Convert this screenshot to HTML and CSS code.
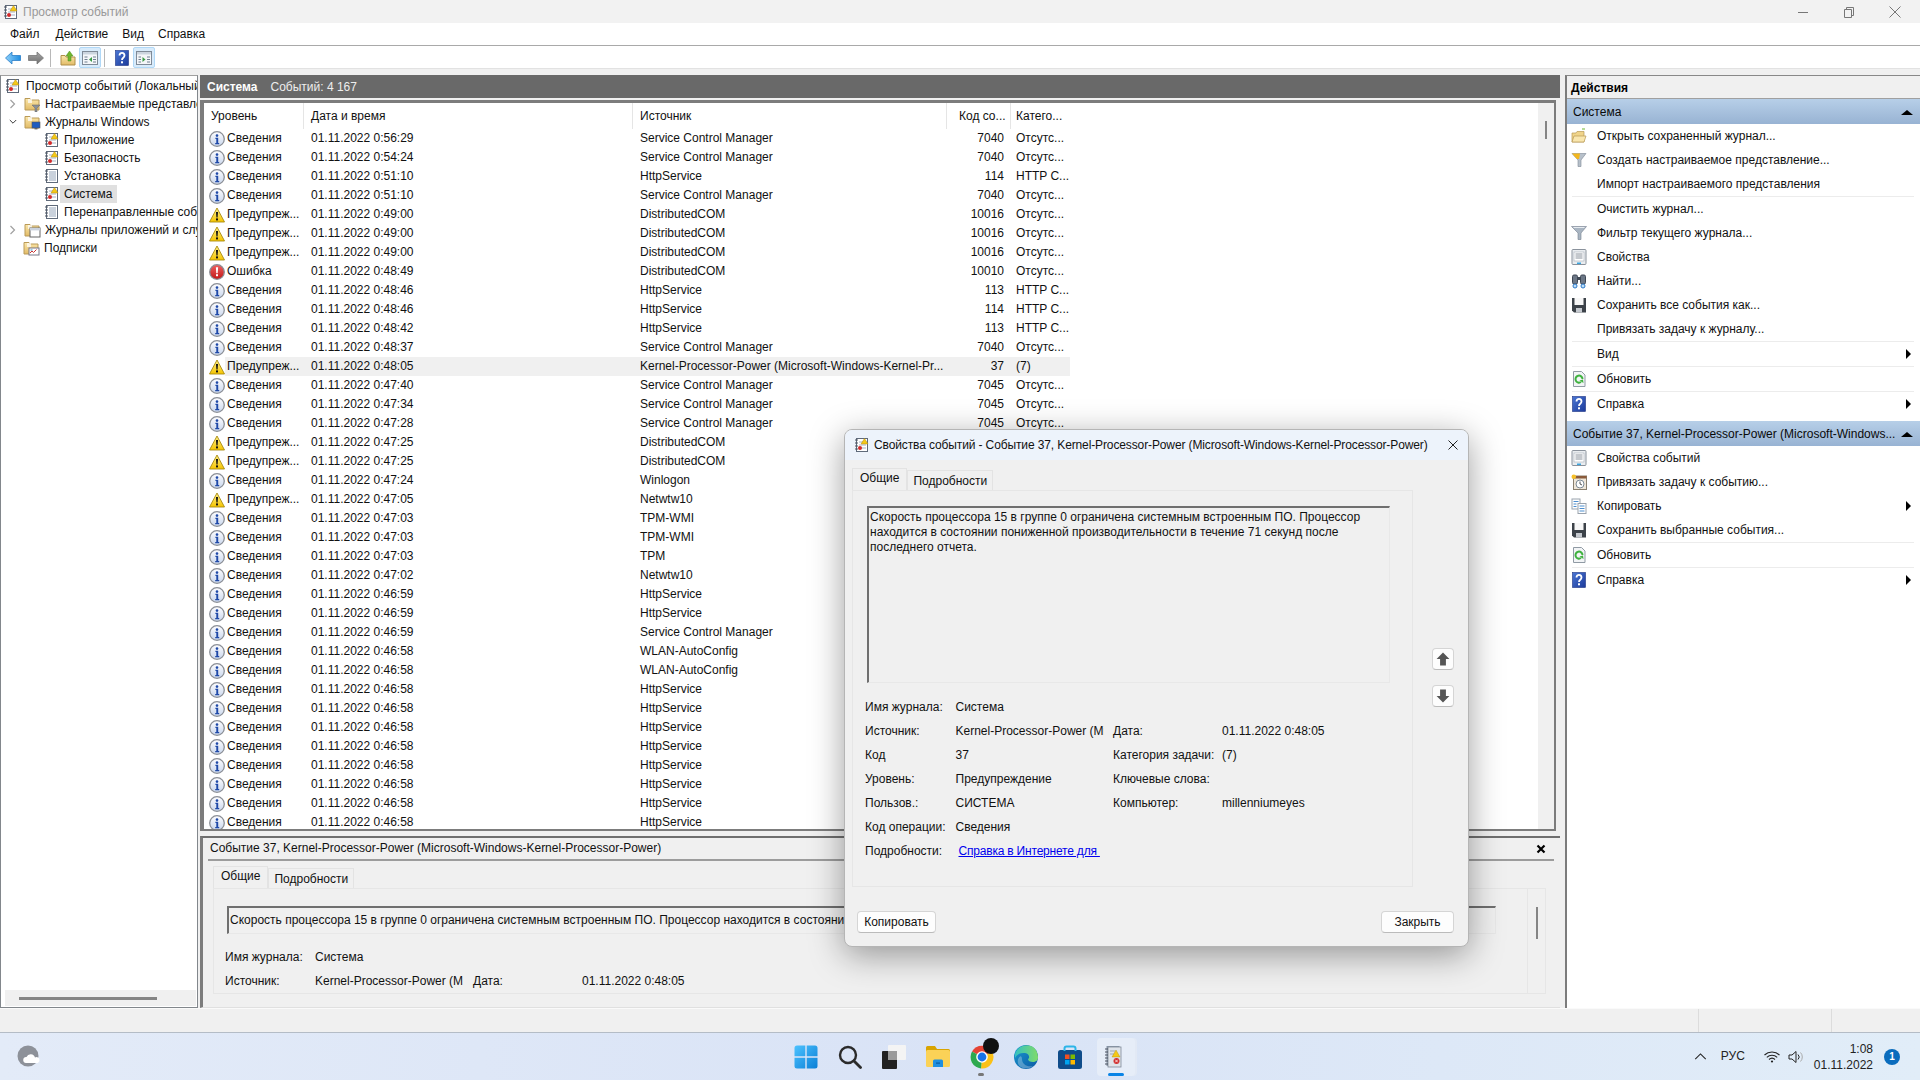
FILE: index.html
```html
<!DOCTYPE html>
<html lang="ru">
<head>
<meta charset="utf-8">
<title>Просмотр событий</title>
<link rel="stylesheet" href="styles.css">
</head>
<body>
<svg class="defs" width="0" height="0" aria-hidden="true">
<defs>
<linearGradient id="gInfo" x1="0" y1="0" x2="0" y2="1"><stop offset="0" stop-color="#fdfdff"/><stop offset="1" stop-color="#c9d6ec"/></linearGradient>
<linearGradient id="gWarn" x1="0" y1="0" x2="0" y2="1"><stop offset="0" stop-color="#fff08a"/><stop offset="1" stop-color="#f5c400"/></linearGradient>
<linearGradient id="gErr" x1="0" y1="0" x2="0" y2="1"><stop offset="0" stop-color="#f06060"/><stop offset="1" stop-color="#c01818"/></linearGradient>
<linearGradient id="gBlue" x1="0" y1="0" x2="1" y2="0"><stop offset="0" stop-color="#8ed0fa"/><stop offset="1" stop-color="#1f8de0"/></linearGradient>
<linearGradient id="gGray" x1="0" y1="0" x2="0" y2="1"><stop offset="0" stop-color="#a8a8a8"/><stop offset="1" stop-color="#6e6e6e"/></linearGradient>
<linearGradient id="gFold" x1="0" y1="0" x2="0" y2="1"><stop offset="0" stop-color="#fbe7ab"/><stop offset="1" stop-color="#e2bb66"/></linearGradient>
<linearGradient id="gHelp" x1="0" y1="0" x2="1" y2="1"><stop offset="0" stop-color="#4a76d4"/><stop offset="1" stop-color="#1c3a9a"/></linearGradient>
<linearGradient id="gWin" x1="0" y1="0" x2="1" y2="1"><stop offset="0" stop-color="#4cc2ff"/><stop offset="1" stop-color="#0a7fd6"/></linearGradient>
<linearGradient id="gEdge" x1="0" y1="0" x2="1" y2="1"><stop offset="0" stop-color="#1a9ad0"/><stop offset="1" stop-color="#0c59a4"/></linearGradient>
<linearGradient id="gEdge2" x1="0" y1="0" x2="1" y2="0"><stop offset="0" stop-color="#35c1c0"/><stop offset="1" stop-color="#7fdb6a"/></linearGradient>

<symbol id="info" viewBox="0 0 16 16"><circle cx="8" cy="8" r="7.3" fill="url(#gInfo)" stroke="#8b8f96" stroke-width="1.3"/><circle cx="8" cy="4.6" r="1.3" fill="#1f49a8"/><path d="M6.4 6.8h2.8v5.2h1v1.2H6.2V12h1.1V8H6.4z" fill="#1f49a8"/></symbol>
<symbol id="warn" viewBox="0 0 16 16"><path d="M8 1 15.5 15H.5z" fill="url(#gWarn)" stroke="#a88a10" stroke-width=".9" stroke-linejoin="round"/><path d="M7 5h2l-.4 5.5h-1.2z" fill="#111"/><rect x="7" y="11.4" width="2" height="2" fill="#111"/></symbol>
<symbol id="err" viewBox="0 0 16 16"><circle cx="8" cy="8" r="7.3" fill="url(#gErr)" stroke="#8b8f96" stroke-width="1.3"/><path d="M6.9 3.2h2.2l-.4 6h-1.4z" fill="#fff"/><rect x="7" y="10.2" width="2" height="2" fill="#fff"/></symbol>

<symbol id="logw" viewBox="0 0 16 16"><rect x="2.5" y="1.5" width="11" height="13" fill="#fff" stroke="#5f6a7a"/><path d="M1 3h3M1 6h3M1 9h3M1 12h3" stroke="#4a5260"/><path d="M5 5h7M5 8h7M5 11h7" stroke="#a4b0c0"/><path d="M10.5 1.5 14 7H7z" fill="#f5c916" stroke="#b08a10" stroke-width=".5"/><circle cx="6" cy="11" r="2" fill="#d32a2a"/></symbol>
<symbol id="log" viewBox="0 0 16 16"><rect x="2.5" y="1.5" width="11" height="13" fill="#fff" stroke="#5f6a7a"/><path d="M1 3h3M1 6h3M1 9h3M1 12h3" stroke="#4a5260"/><path d="M5 4h7M5 6h7M5 8h7M5 10h7M5 12h7" stroke="#93a3b8"/></symbol>
<symbol id="folder" viewBox="0 0 17 16"><path d="M1 4V2.5h5L7 4h8v10H1z" fill="url(#gFold)" stroke="#b99a58"/><path d="M4 3h4v4H4z" fill="#fff" opacity=".7"/></symbol>
<symbol id="ffilter" viewBox="0 0 17 16"><use href="#folder" width="17" height="16"/><path d="M8 9h8l-3 3v4h-2v-4z" fill="#8a9098" stroke="#666" stroke-width=".5"/></symbol>
<symbol id="fwin" viewBox="0 0 17 16"><use href="#folder" width="17" height="16"/><rect x="8" y="8" width="8" height="6" fill="#1e5cc0" stroke="#555" stroke-width=".6"/><rect x="10.5" y="14" width="3" height="1.4" fill="#666"/></symbol>
<symbol id="fapp" viewBox="0 0 17 16"><use href="#folder" width="17" height="16"/><rect x="6" y="6" width="10" height="9" fill="#fff" stroke="#666"/><rect x="6" y="6" width="10" height="2.4" fill="#cbd3de"/></symbol>
<symbol id="fsub" viewBox="0 0 17 16"><use href="#folder" width="17" height="16"/><rect x="6" y="8" width="10" height="7" fill="#fff" stroke="#778"/><path d="M7 13l2-2 1.5 1.5 3-3" stroke="#c33" fill="none"/><path d="M7.5 10h2" stroke="#39c"/></symbol>

<symbol id="back" viewBox="0 0 16 14"><path d="M.5 7 7 1v3.5h8.5v5H7V13z" fill="url(#gBlue)" stroke="#2a7ec8" stroke-width=".8"/></symbol>
<symbol id="fwd" viewBox="0 0 16 14"><path d="M15.5 7 9 1v3.5H.5v5H9V13z" fill="url(#gGray)" stroke="#777" stroke-width=".8"/></symbol>
<symbol id="up" viewBox="0 0 16 16"><path d="M1 5.500h4l1 1.500h9v8H1z" fill="url(#gFold)" stroke="#b08f4a"/><path d="M8 11V6H6l3.500-5L13 6h-2v5z" fill="#6fb72e" stroke="#4d8a1c" stroke-width=".5"/></symbol>
<symbol id="paneL" viewBox="0 0 16 16"><rect x=".5" y="1.500" width="15" height="13" fill="#f4f6f9" stroke="#7f8a97"/><rect x="1" y="2" width="14" height="2.500" fill="#ccd5df"/><path d="M2.500 7h3M2.500 9.500h3M2.500 12h3M11 7h3M11 9.500h3M11 12h3" stroke="#6f7e90"/><path d="M10 7v5L7 9.500z" fill="#3b9b45"/></symbol>
<symbol id="paneR" viewBox="0 0 16 16"><rect x=".5" y="1.500" width="15" height="13" fill="#f4f6f9" stroke="#7f8a97"/><rect x="1" y="2" width="14" height="2.500" fill="#ccd5df"/><path d="M2.500 7h2.500M2.500 9.500h2.500M2.500 12h2.500M11 7h3M11 9.500h3M11 12h3" stroke="#6f7e90"/><path d="M6.500 7v5l3-2.500z" fill="#3b9b45"/></symbol>
<symbol id="help" viewBox="0 0 16 16"><rect x="1.500" y=".5" width="13" height="15" fill="url(#gHelp)" stroke="#1c3384" stroke-width=".6"/><path d="M5.500 5.500C5.500 2 10.500 2 10.500 5.500 10.500 8 8 7.500 8 10" fill="none" stroke="#fff" stroke-width="1.800"/><rect x="7" y="11.300" width="2" height="2" fill="#fff"/></symbol>

<symbol id="open" viewBox="0 0 16 16"><path d="M1 5h4l1-1.500h7V14H1z" fill="#f0d48a" stroke="#b89a55" stroke-width=".7"/><path d="M1 14l2-6h12l-2 6z" fill="#f9e6ae" stroke="#b89a55" stroke-width=".7"/><path d="M11 1h3" stroke="#6fb72e"/></symbol>
<symbol id="fcreate" viewBox="0 0 16 16"><path d="M1 1.500h14L10 8v6.500H7V8z" fill="#b7c0ca" stroke="#7d8895" stroke-width=".6"/><path d="M1 1.500h8L8 7 6 7z" fill="#f3b71e"/></symbol>
<symbol id="filter" viewBox="0 0 16 16"><path d="M.5 1.500h15L10 8v6.500H7V8z" fill="#a9b5c2" stroke="#75808e" stroke-width=".6"/><path d="M2.500 2.500h11" stroke="#e6ebf0"/></symbol>
<symbol id="props" viewBox="0 0 16 16"><rect x="1" y=".5" width="14" height="15" rx="1" fill="#eaedf0" stroke="#8a929c"/><rect x="3" y="3" width="10" height="9" fill="#fff" stroke="#a7aeb8" stroke-width=".6"/><path d="M4.500 5h7M4.500 7h7M4.500 9h7" stroke="#8a929c"/><rect x="6" y="13.500" width="4" height="1.500" fill="#3aa5e0"/></symbol>
<symbol id="find" viewBox="0 0 16 16"><rect x="1.500" y="2" width="5" height="9" rx="1.500" fill="#6c7786" stroke="#3e4754"/><rect x="9.500" y="2" width="5" height="9" rx="1.500" fill="#6c7786" stroke="#3e4754"/><rect x="6" y="4" width="4" height="3" fill="#3e4754"/><circle cx="4" cy="13" r="2" fill="#bfe0fa" stroke="#2a78c8"/><circle cx="12" cy="13" r="2" fill="#bfe0fa" stroke="#2a78c8"/></symbol>
<symbol id="save" viewBox="0 0 16 16"><path d="M1 1h14v14.500H3L1 13.500z" fill="#3c4249"/><rect x="3.500" y="1" width="9" height="7" fill="#f7f7f7"/><rect x="5" y="11" width="6" height="4.500" fill="#c5c9cf"/></symbol>
<symbol id="refresh" viewBox="0 0 16 16"><path d="M2.500.5h8l3.500 3.500v11.500H2.500z" fill="#f2f4f6" stroke="#909aa4"/><path d="M11.500 8A3.500 3.500 0 1 0 10 11" fill="none" stroke="#3fb23f" stroke-width="2"/><path d="M8.500 9.500l3.500-1 .5 3.500z" fill="#3fb23f"/></symbol>
<symbol id="sched" viewBox="0 0 16 16"><rect x="2.500" y="2" width="13" height="13.500" fill="#efe6d8" stroke="#8a7f6e"/><rect x="2.500" y="2" width="13" height="2.500" fill="#8a5a3a"/><circle cx="9" cy="10" r="4" fill="#fff" stroke="#7d8a95"/><path d="M9 7.500V10l2 1" fill="none" stroke="#555"/><circle cx="2.800" cy="2.800" r="2.300" fill="#f6c02a"/></symbol>
<symbol id="copy" viewBox="0 0 16 16"><rect x="1" y="1" width="8" height="10" fill="#fff" stroke="#9aa3ae"/><rect x="7" y="5.500" width="8" height="10" fill="#fff" stroke="#9aa3ae"/><path d="M2.500 3.500h5M2.500 6h3M2.500 8.500h3M8.500 8h5M8.500 10.500h5M8.500 13h5" stroke="#4d8fd0"/></symbol>

<symbol id="tWin" viewBox="0 0 24 24"><path d="M.5 3Q.5.5 3 .5h8.300v10.800H.5zM12.700.5H21Q23.500.5 23.500 3v8.300H12.700zM.5 12.700h10.800v10.800H3Q.5 23.500.5 21zM12.700 12.700h10.800V21q0 2.500-2.500 2.500h-8.300z" fill="url(#gWin)"/></symbol>
<symbol id="tSearch" viewBox="0 0 24 24"><circle cx="10" cy="10" r="8" fill="none" stroke="#2b2b2b" stroke-width="2.400"/><path d="M16 16l6.500 6.500" stroke="#2b2b2b" stroke-width="2.800" stroke-linecap="round"/></symbol>
<symbol id="tView" viewBox="0 0 24 24"><rect x="0" y="6" width="15" height="18" rx="1" fill="#222"/><rect x="6" y="0" width="18" height="15" rx="1" fill="#f4f4f4"/><rect x="6" y="6" width="9" height="9" fill="#9b9b9b"/></symbol>
<symbol id="tFolder" viewBox="0 0 24 24"><path d="M0 2.500Q0 1 1.500 1H9l2 3h11.500Q24 4 24 5.500v3H0z" fill="#d9a400"/><rect x="0" y="5" width="24" height="17" rx="1.500" fill="#fbd257"/><path d="M7 16q0-1.500 1.500-1.500h7q1.500 0 1.500 1.500v6H7z" fill="#1f8fe0"/><rect x="10" y="17.500" width="4" height="1.200" fill="#0b5aa0"/></symbol>
<symbol id="tChrome" viewBox="0 0 24 24"><path d="M12 12 2 6.500A11.500 11.500 0 0 1 22 6.500z" fill="#e54335"/><path d="M12 12 22 6.500A11.500 11.500 0 0 1 11 23.500z" fill="#fbc116"/><path d="M12 12 11 23.500A11.500 11.500 0 0 1 2 6.500z" fill="#2da94f"/><circle cx="12" cy="12" r="5.800" fill="#fff"/><circle cx="12" cy="12" r="4.400" fill="#1a73e8"/></symbol>
<symbol id="tEdge" viewBox="0 0 24 24"><circle cx="12" cy="12" r="12" fill="url(#gEdge)"/><path d="M1 9C3 2 10-.5 16 .8 21 2 24 7 24 12.500c0 3-2.500 4.500-5 4.500-3 0-5-1-5-3 2-1 1.500-5.500-3-6C6.500 7.500 3 9 1 13z" fill="url(#gEdge2)"/><path d="M8 14c0 5 5 8.500 11 7-3 2.500-9 3.500-13 .5C3 19 3 14 6 11.500c1-.5 2 .5 2 2.500z" fill="#fff" opacity=".28"/></symbol>
<symbol id="tStore" viewBox="0 0 24 24"><rect x="0" y="5" width="24" height="19" rx="2.500" fill="#0f4c8a"/><path d="M6.500 6V3.500Q6.500 1.500 8.500 1.500h7Q17.500 1.500 17.500 3.500V6" fill="none" stroke="#2cb5e8" stroke-width="2"/><rect x="7" y="9.500" width="4.500" height="4.500" fill="#f25022"/><rect x="12.500" y="9.500" width="4.500" height="4.500" fill="#7fba00"/><rect x="7" y="15" width="4.500" height="4.500" fill="#00a4ef"/><rect x="12.500" y="15" width="4.500" height="4.500" fill="#ffb900"/></symbol>
<symbol id="tApp" viewBox="0 0 24 24"><path d="M4.500 1h13v20h-13z" fill="#8b97a8"/><rect x="6" y="2" width="13" height="20" fill="#dfe4ea" stroke="#7f8a98" stroke-width=".8"/><path d="M3 4h3M3 7h3M3 10h3M3 13h3M3 16h3M3 19h3" stroke="#4a5260"/><path d="M8 6h5M8 9h4" stroke="#9aa6b6"/><path d="M14 5l4 7h-8z" fill="#f5c916" stroke="#a88a10" stroke-width=".4"/><circle cx="14.500" cy="16" r="3" fill="#d23030"/><path d="M13.200 14.700l2.600 2.600M15.800 14.700l-2.600 2.600" stroke="#fff" stroke-width=".8"/></symbol>
</defs>
</svg>

<header class="titlebar">
  <svg class="ico16 tb-ico"><use href="#logw"/></svg>
  <span class="tb-title">Просмотр событий</span>
  <div class="wincontrols">
    <svg class="wc" viewBox="0 0 12 12"><path d="M1 6.500h10" stroke="#777"/></svg>
    <svg class="wc" viewBox="0 0 12 12"><path d="M1.500 3.500h7v8h-7zM3.500 3.500v-2h7v8h-2" fill="none" stroke="#777"/></svg>
    <svg class="wc" viewBox="0 0 12 12"><path d="M.5.500l11 11M11.500.500l-11 11" stroke="#777"/></svg>
  </div>
</header>
<nav class="menubar"><span class="menu-first">Файл</span><span>Действие</span><span>Вид</span><span>Справка</span></nav>
<div class="toolbar">
  <span class="tool"><svg class="ico-arrow"><use href="#back"/></svg></span>
  <span class="tool"><svg class="ico-arrow"><use href="#fwd"/></svg></span>
  <span class="tsep"></span>
  <span class="tool tool-up"><svg class="ico16"><use href="#up"/></svg></span>
  <span class="tool tool-on"><svg class="ico16"><use href="#paneL"/></svg></span>
  <span class="tsep"></span>
  <span class="tool tool-help"><svg class="ico16"><use href="#help"/></svg></span>
  <span class="tool tool-on"><svg class="ico16"><use href="#paneR"/></svg></span>
</div>

<main class="main">
  <aside class="tree">
    <div class="tree-body">
      <div class="tn lv0"><svg class="ico16"><use href="#logw"/></svg><span class="tn-text">Просмотр событий (Локальный)</span></div>
      <div class="tn lv1"><svg class="exp" viewBox="0 0 8 10"><path d="M1.500 1l4 4-4 4" fill="none" stroke="#a0a0a0" stroke-width="1.200"/></svg><svg class="ico17"><use href="#ffilter"/></svg><span class="tn-text">Настраиваемые представления</span></div>
      <div class="tn lv1"><svg class="exp" viewBox="0 0 10 8"><path d="M1 1.500l4 4 4-4" fill="none" stroke="#333" stroke-width="1.200"/></svg><svg class="ico17"><use href="#fwin"/></svg><span class="tn-text">Журналы Windows</span></div>
      <div class="tn lv2"><svg class="ico16"><use href="#logw"/></svg><span class="tn-text">Приложение</span></div>
      <div class="tn lv2"><svg class="ico16"><use href="#logw"/></svg><span class="tn-text">Безопасность</span></div>
      <div class="tn lv2"><svg class="ico16"><use href="#log"/></svg><span class="tn-text">Установка</span></div>
      <div class="tn lv2 tn-sel"><svg class="ico16"><use href="#logw"/></svg><span class="tn-text">Система</span></div>
      <div class="tn lv2"><svg class="ico16"><use href="#log"/></svg><span class="tn-text">Перенаправленные события</span></div>
      <div class="tn lv1"><svg class="exp" viewBox="0 0 8 10"><path d="M1.500 1l4 4-4 4" fill="none" stroke="#a0a0a0" stroke-width="1.200"/></svg><svg class="ico17"><use href="#fapp"/></svg><span class="tn-text">Журналы приложений и служб</span></div>
      <div class="tn lv1 noexp"><svg class="ico17"><use href="#fsub"/></svg><span class="tn-text">Подписки</span></div>
    </div>
    <div class="hscroll"><span class="hthumb"></span></div>
  </aside>

  <section class="center">
    <div class="listhead"><b>Система</b><span>Событий: 4 167</span></div>
    <div class="listframe">
      <div class="listtable">
        <div class="row head"><span class="c1">Уровень</span><span class="c2">Дата и время</span><span class="c3">Источник</span><span class="c4 c4h">Код со...</span><span class="c5">Катего...</span></div>
        <div class="row"><span class="c1"><svg class="ico16"><use href="#info"/></svg>Сведения</span><span class="c2">01.11.2022 0:56:29</span><span class="c3">Service Control Manager</span><span class="c4">7040</span><span class="c5">Отсутс...</span></div>
        <div class="row"><span class="c1"><svg class="ico16"><use href="#info"/></svg>Сведения</span><span class="c2">01.11.2022 0:54:24</span><span class="c3">Service Control Manager</span><span class="c4">7040</span><span class="c5">Отсутс...</span></div>
        <div class="row"><span class="c1"><svg class="ico16"><use href="#info"/></svg>Сведения</span><span class="c2">01.11.2022 0:51:10</span><span class="c3">HttpService</span><span class="c4">114</span><span class="c5">HTTP C...</span></div>
        <div class="row"><span class="c1"><svg class="ico16"><use href="#info"/></svg>Сведения</span><span class="c2">01.11.2022 0:51:10</span><span class="c3">Service Control Manager</span><span class="c4">7040</span><span class="c5">Отсутс...</span></div>
        <div class="row"><span class="c1"><svg class="ico16"><use href="#warn"/></svg>Предупреж...</span><span class="c2">01.11.2022 0:49:00</span><span class="c3">DistributedCOM</span><span class="c4">10016</span><span class="c5">Отсутс...</span></div>
        <div class="row"><span class="c1"><svg class="ico16"><use href="#warn"/></svg>Предупреж...</span><span class="c2">01.11.2022 0:49:00</span><span class="c3">DistributedCOM</span><span class="c4">10016</span><span class="c5">Отсутс...</span></div>
        <div class="row"><span class="c1"><svg class="ico16"><use href="#warn"/></svg>Предупреж...</span><span class="c2">01.11.2022 0:49:00</span><span class="c3">DistributedCOM</span><span class="c4">10016</span><span class="c5">Отсутс...</span></div>
        <div class="row"><span class="c1"><svg class="ico16"><use href="#err"/></svg>Ошибка</span><span class="c2">01.11.2022 0:48:49</span><span class="c3">DistributedCOM</span><span class="c4">10010</span><span class="c5">Отсутс...</span></div>
        <div class="row"><span class="c1"><svg class="ico16"><use href="#info"/></svg>Сведения</span><span class="c2">01.11.2022 0:48:46</span><span class="c3">HttpService</span><span class="c4">113</span><span class="c5">HTTP C...</span></div>
        <div class="row"><span class="c1"><svg class="ico16"><use href="#info"/></svg>Сведения</span><span class="c2">01.11.2022 0:48:46</span><span class="c3">HttpService</span><span class="c4">114</span><span class="c5">HTTP C...</span></div>
        <div class="row"><span class="c1"><svg class="ico16"><use href="#info"/></svg>Сведения</span><span class="c2">01.11.2022 0:48:42</span><span class="c3">HttpService</span><span class="c4">113</span><span class="c5">HTTP C...</span></div>
        <div class="row"><span class="c1"><svg class="ico16"><use href="#info"/></svg>Сведения</span><span class="c2">01.11.2022 0:48:37</span><span class="c3">Service Control Manager</span><span class="c4">7040</span><span class="c5">Отсутс...</span></div>
        <div class="row row-sel"><span class="c1"><svg class="ico16"><use href="#warn"/></svg>Предупреж...</span><span class="c2">01.11.2022 0:48:05</span><span class="c3">Kernel-Processor-Power (Microsoft-Windows-Kernel-Pr...</span><span class="c4">37</span><span class="c5">(7)</span></div>
        <div class="row"><span class="c1"><svg class="ico16"><use href="#info"/></svg>Сведения</span><span class="c2">01.11.2022 0:47:40</span><span class="c3">Service Control Manager</span><span class="c4">7045</span><span class="c5">Отсутс...</span></div>
        <div class="row"><span class="c1"><svg class="ico16"><use href="#info"/></svg>Сведения</span><span class="c2">01.11.2022 0:47:34</span><span class="c3">Service Control Manager</span><span class="c4">7045</span><span class="c5">Отсутс...</span></div>
        <div class="row"><span class="c1"><svg class="ico16"><use href="#info"/></svg>Сведения</span><span class="c2">01.11.2022 0:47:28</span><span class="c3">Service Control Manager</span><span class="c4">7045</span><span class="c5">Отсутс...</span></div>
        <div class="row"><span class="c1"><svg class="ico16"><use href="#warn"/></svg>Предупреж...</span><span class="c2">01.11.2022 0:47:25</span><span class="c3">DistributedCOM</span></div>
        <div class="row"><span class="c1"><svg class="ico16"><use href="#warn"/></svg>Предупреж...</span><span class="c2">01.11.2022 0:47:25</span><span class="c3">DistributedCOM</span></div>
        <div class="row"><span class="c1"><svg class="ico16"><use href="#info"/></svg>Сведения</span><span class="c2">01.11.2022 0:47:24</span><span class="c3">Winlogon</span></div>
        <div class="row"><span class="c1"><svg class="ico16"><use href="#warn"/></svg>Предупреж...</span><span class="c2">01.11.2022 0:47:05</span><span class="c3">Netwtw10</span></div>
        <div class="row"><span class="c1"><svg class="ico16"><use href="#info"/></svg>Сведения</span><span class="c2">01.11.2022 0:47:03</span><span class="c3">TPM-WMI</span></div>
        <div class="row"><span class="c1"><svg class="ico16"><use href="#info"/></svg>Сведения</span><span class="c2">01.11.2022 0:47:03</span><span class="c3">TPM-WMI</span></div>
        <div class="row"><span class="c1"><svg class="ico16"><use href="#info"/></svg>Сведения</span><span class="c2">01.11.2022 0:47:03</span><span class="c3">TPM</span></div>
        <div class="row"><span class="c1"><svg class="ico16"><use href="#info"/></svg>Сведения</span><span class="c2">01.11.2022 0:47:02</span><span class="c3">Netwtw10</span></div>
        <div class="row"><span class="c1"><svg class="ico16"><use href="#info"/></svg>Сведения</span><span class="c2">01.11.2022 0:46:59</span><span class="c3">HttpService</span></div>
        <div class="row"><span class="c1"><svg class="ico16"><use href="#info"/></svg>Сведения</span><span class="c2">01.11.2022 0:46:59</span><span class="c3">HttpService</span></div>
        <div class="row"><span class="c1"><svg class="ico16"><use href="#info"/></svg>Сведения</span><span class="c2">01.11.2022 0:46:59</span><span class="c3">Service Control Manager</span></div>
        <div class="row"><span class="c1"><svg class="ico16"><use href="#info"/></svg>Сведения</span><span class="c2">01.11.2022 0:46:58</span><span class="c3">WLAN-AutoConfig</span></div>
        <div class="row"><span class="c1"><svg class="ico16"><use href="#info"/></svg>Сведения</span><span class="c2">01.11.2022 0:46:58</span><span class="c3">WLAN-AutoConfig</span></div>
        <div class="row"><span class="c1"><svg class="ico16"><use href="#info"/></svg>Сведения</span><span class="c2">01.11.2022 0:46:58</span><span class="c3">HttpService</span></div>
        <div class="row"><span class="c1"><svg class="ico16"><use href="#info"/></svg>Сведения</span><span class="c2">01.11.2022 0:46:58</span><span class="c3">HttpService</span></div>
        <div class="row"><span class="c1"><svg class="ico16"><use href="#info"/></svg>Сведения</span><span class="c2">01.11.2022 0:46:58</span><span class="c3">HttpService</span></div>
        <div class="row"><span class="c1"><svg class="ico16"><use href="#info"/></svg>Сведения</span><span class="c2">01.11.2022 0:46:58</span><span class="c3">HttpService</span></div>
        <div class="row"><span class="c1"><svg class="ico16"><use href="#info"/></svg>Сведения</span><span class="c2">01.11.2022 0:46:58</span><span class="c3">HttpService</span></div>
        <div class="row"><span class="c1"><svg class="ico16"><use href="#info"/></svg>Сведения</span><span class="c2">01.11.2022 0:46:58</span><span class="c3">HttpService</span></div>
        <div class="row"><span class="c1"><svg class="ico16"><use href="#info"/></svg>Сведения</span><span class="c2">01.11.2022 0:46:58</span><span class="c3">HttpService</span></div>
        <div class="row"><span class="c1"><svg class="ico16"><use href="#info"/></svg>Сведения</span><span class="c2">01.11.2022 0:46:58</span><span class="c3">HttpService</span></div>
      </div>
      <div class="vscroll"><span class="vthumb"></span></div>
    </div>

    <div class="detail">
      <div class="detail-head"><span>Событие 37, Kernel-Processor-Power (Microsoft-Windows-Kernel-Processor-Power)</span>
        <svg class="detail-x" viewBox="0 0 10 10"><path d="M1.500 1.500l7 7M8.500 1.500l-7 7" stroke="#000" stroke-width="2.200"/></svg></div>
      <div class="tabs detail-tabs"><span class="tab tab-on">Общие</span><span class="tab">Подробности</span></div>
      <div class="detail-panel">
        <div class="detail-main">
          <div class="textbox detail-box">Скорость процессора 15 в группе 0 ограничена системным встроенным ПО. Процессор находится в состоянии пониженной производительности в течение 71 секунд после последнего отчета.</div>
          <div class="fields detail-fields">
            <span>Имя журнала:</span><span>Система</span><span></span><span></span>
            <span>Источник:</span><span class="clip">Kernel-Processor-Power (Microsoft-Windows-Kernel-Processor-Power)</span><span>Дата:</span><span>01.11.2022 0:48:05</span>
          </div>
        </div>
        <div class="detail-scroll"><span class="detail-thumb"></span></div>
      </div>
    </div>
  </section>

  <aside class="actions">
    <div class="act-title">Действия</div>
    <div class="act-head"><span>Система</span><i class="tri-up"></i></div>
    <div class="act"><svg class="ico16"><use href="#open"/></svg><span>Открыть сохраненный журнал...</span></div>
    <div class="act"><svg class="ico16"><use href="#fcreate"/></svg><span>Создать настраиваемое представление...</span></div>
    <div class="act"><span>Импорт настраиваемого представления</span></div>
    <div class="act-sep"></div>
    <div class="act"><span>Очистить журнал...</span></div>
    <div class="act"><svg class="ico16"><use href="#filter"/></svg><span>Фильтр текущего журнала...</span></div>
    <div class="act"><svg class="ico16"><use href="#props"/></svg><span>Свойства</span></div>
    <div class="act"><svg class="ico16"><use href="#find"/></svg><span>Найти...</span></div>
    <div class="act"><svg class="ico16"><use href="#save"/></svg><span>Сохранить все события как...</span></div>
    <div class="act"><span>Привязать задачу к журналу...</span></div>
    <div class="act-sep"></div>
    <div class="act"><span>Вид</span><i class="tri-right"></i></div>
    <div class="act-sep"></div>
    <div class="act"><svg class="ico16"><use href="#refresh"/></svg><span>Обновить</span></div>
    <div class="act-sep"></div>
    <div class="act"><svg class="ico16"><use href="#help"/></svg><span>Справка</span><i class="tri-right"></i></div>
    <div class="act-head act-head2"><span>Событие 37, Kernel-Processor-Power (Microsoft-Windows...</span><i class="tri-up"></i></div>
    <div class="act"><svg class="ico16"><use href="#props"/></svg><span>Свойства событий</span></div>
    <div class="act"><svg class="ico16"><use href="#sched"/></svg><span>Привязать задачу к событию...</span></div>
    <div class="act"><svg class="ico16"><use href="#copy"/></svg><span>Копировать</span><i class="tri-right"></i></div>
    <div class="act"><svg class="ico16"><use href="#save"/></svg><span>Сохранить выбранные события...</span></div>
    <div class="act-sep"></div>
    <div class="act"><svg class="ico16"><use href="#refresh"/></svg><span>Обновить</span></div>
    <div class="act-sep"></div>
    <div class="act"><svg class="ico16"><use href="#help"/></svg><span>Справка</span><i class="tri-right"></i></div>
  </aside>
</main>

<div class="statusbar"><span class="st-a"></span><span class="st-b"></span><span class="st-c"></span></div>

<footer class="taskbar">
  <div class="tk-left">
    <svg class="weather" viewBox="0 0 24 24"><circle cx="11" cy="11" r="10.500" fill="#8d9199"/><path d="M9 18a3 3 0 0 1 .5-6 4.500 4.500 0 0 1 8.500.5 3 3 0 0 1 4.500 2.700 3 3 0 0 1-3 2.800z" fill="#fff"/></svg>
  </div>
  <div class="tk-center">
    <span class="tk"><svg class="ico24"><use href="#tWin"/></svg></span>
    <span class="tk"><svg class="ico24"><use href="#tSearch"/></svg></span>
    <span class="tk"><svg class="ico24"><use href="#tView"/></svg></span>
    <span class="tk"><svg class="ico24"><use href="#tFolder"/></svg></span>
    <span class="tk tk-run"><svg class="ico24"><use href="#tChrome"/></svg><i class="tk-badge"></i><i class="tk-dot"></i></span>
    <span class="tk"><svg class="ico24"><use href="#tEdge"/></svg></span>
    <span class="tk"><svg class="ico24"><use href="#tStore"/></svg></span>
    <span class="tk tk-active"><svg class="ico24"><use href="#tApp"/></svg><i class="tk-bar"></i></span>
  </div>
  <div class="tk-right">
    <svg class="tray-chev" viewBox="0 0 14 8"><path d="M1 7l6-6 6 6" fill="none" stroke="#222" stroke-width="1.200"/></svg>
    <span class="tray-lang">РУС</span>
    <svg class="tray-wifi" viewBox="0 0 16 12"><path d="M.5 4a11 11 0 0 1 15 0M2.800 6.300a7.700 7.700 0 0 1 10.400 0M5 8.500a4.400 4.400 0 0 1 6 0" fill="none" stroke="#222" stroke-width="1.100"/><circle cx="8" cy="10.500" r="1.100" fill="#222"/></svg>
    <svg class="tray-vol" viewBox="0 0 16 14"><path d="M1 5h3l4-3.500v11L4 9H1z" fill="none" stroke="#222" stroke-width="1"/><path d="M10 4.500a3.500 3.500 0 0 1 0 5" fill="none" stroke="#222"/><path d="M12.500 2.500a6.500 6.500 0 0 1 0 9" fill="none" stroke="#aaa"/></svg>
    <div class="clock"><span>1:08</span><span>01.11.2022</span></div>
    <span class="notif">1</span>
  </div>
</footer>

<div class="dialog">
  <div class="dlg-title">
    <svg class="ico16"><use href="#logw"/></svg>
    <span class="dlg-caption">Свойства событий - Событие 37, Kernel-Processor-Power (Microsoft-Windows-Kernel-Processor-Power)</span>
    <svg class="dlg-x" viewBox="0 0 10 10"><path d="M.5.500l9 9M9.500.500l-9 9" stroke="#222"/></svg>
  </div>
  <div class="dlg-body">
    <div class="dlg-left">
      <div class="tabs dlg-tabs"><span class="tab tab-on">Общие</span><span class="tab">Подробности</span></div>
      <div class="dlg-panel">
        <div class="textbox dlg-box">Скорость процессора 15 в группе 0 ограничена системным встроенным ПО. Процессор находится в состоянии пониженной производительности в течение 71 секунд после последнего отчета.</div>
        <div class="fields dlg-fields">
          <span>Имя журнала:</span><span>Система</span><span></span><span></span>
          <span>Источник:</span><span class="clip">Kernel-Processor-Power (Microsoft-Windows-Kernel-Processor-Power)</span><span>Дата:</span><span>01.11.2022 0:48:05</span>
          <span>Код</span><span>37</span><span>Категория задачи:</span><span>(7)</span>
          <span>Уровень:</span><span>Предупреждение</span><span>Ключевые слова:</span><span></span>
          <span>Пользов.:</span><span>СИСТЕМА</span><span>Компьютер:</span><span>millenniumeyes</span>
          <span>Код операции:</span><span>Сведения</span><span></span><span></span>
          <span>Подробности:</span><a class="link" href="#">Справка в Интернете для </a><span></span><span></span>
        </div>
      </div>
    </div>
    <div class="dlg-side">
      <button class="btn btn-sq"><svg class="arr" viewBox="0 0 12 12"><path d="M6 .5 11.500 6H8.500v5.500h-5V6H.5z" fill="#555"/></svg></button>
      <button class="btn btn-sq"><svg class="arr" viewBox="0 0 12 12"><path d="M6 11.500.5 6h3V.5h5V6h3z" fill="#555"/></svg></button>
    </div>
  </div>
  <div class="dlg-foot"><button class="btn btn-copy">Копировать</button><button class="btn btn-close">Закрыть</button></div>
</div>
</body>
</html>
```
FILE: styles.css
```css
* { box-sizing: border-box; }
html, body { margin: 0; padding: 0; }
body {
  width: 1920px; height: 1080px; overflow: hidden; position: relative;
  display: flex; flex-direction: column;
  background: #f0f0f0; color: #111;
  font: 12px/15px "Liberation Sans", Arial, sans-serif;
}
svg { display: block; flex: none; }
.defs { position: absolute; }
.ico16 { width: 16px; height: 16px; }
.ico17 { width: 17px; height: 16px; }
.ico24 { width: 24px; height: 24px; }
.ico-arrow { width: 16px; height: 14px; }

/* window chrome */
.titlebar { height: 23px; background: #f2f2f2; display: flex; align-items: center; padding: 1px 0 0 3px; }
.tb-ico { margin-right: 4px; }
.tb-title { color: #999; }
.wincontrols { margin-left: auto; display: flex; gap: 34px; padding-right: 19px; }
.wc { width: 12px; height: 12px; }
.menubar { height: 23px; background: #fff; border-bottom: 1px solid #a9a9a9; display: flex; gap: 14px; padding-left: 10px; align-items: center; }
.menu-first { margin-right: 2px; }
.toolbar { height: 23px; background: #fff; border-bottom: 1px solid #e2e2e2; display: flex; align-items: center; padding: 1px 0 0 5px; }
.tool { height: 21px; display: flex; align-items: center; justify-content: center; width: 16px; margin-right: 7px; }
.tool-up { margin-right: 3px; }
.tool-on { width: 22px; background: #d8ebfb; border: 1px solid #b0d8f7; border-radius: 2px; margin-right: 4px; }
.tool-help { margin-right: 3px; }
.tsep { width: 1px; height: 18px; background: #b8b8b8; margin-right: 9px; margin-left: -1px; }

/* main */
.main { height: 939px; display: flex; padding-top: 6px; background: #f0f0f0; }

.tree { width: 198px; background: #fff; border: 1px solid #82878c; border-top: 1px solid #a0a0a0; display: flex; flex-direction: column; height: 933px; }
.tree-body { flex: 1; padding-top: 1px; overflow: hidden; }
.tn { height: 18px; display: flex; align-items: center; white-space: nowrap; overflow: hidden; }
.tn-text { padding: 0 0 0 3px; }
.lv0 { padding-left: 4px; }
.lv0 .tn-text { padding-left: 5px; }
.lv1 { padding-left: 8px; }
.lv1 .tn-text { padding-left: 4px; }
.noexp { padding-left: 22px; }
.exp { width: 8px; height: 10px; margin-right: 6px; }
.lv1 .exp { margin-right: 7px; }
.lv2 { padding-left: 43px; }
.lv2 .tn-text { padding: 0 5px 0 4px; height: 18px; line-height: 18px; }
.tn-sel .tn-text { background: #e0e0e0; margin-left: 0; }
.hscroll { height: 16px; background: #f0f0f0; margin: 0 1px 1px 4px; display: flex; align-items: center; }
.hthumb { width: 138px; height: 3px; background: #858585; margin-left: 14px; }

.center { width: 1360px; margin-left: 2px; display: flex; flex-direction: column; }
.listhead { height: 23px; background: #696969; color: #eee; display: flex; align-items: center; padding: 1px 0 0 7px; gap: 13px; flex: none; }
.listhead b { color: #fff; }
.listframe { margin-top: 2px; height: 731px; margin-right: 4px; border: 3px solid #7c7c7c; border-width: 3px 2px 2px 4px; background: #fff; display: flex; flex: none; overflow: hidden; }
.listtable { flex: 1; }
.row { height: 19px; display: flex; align-items: center; white-space: nowrap; line-height: 19px; }
.head { height: 26px; }
.c1 { width: 100px; padding-left: 5px; display: flex; align-items: center; gap: 2px; flex: none; }
.head .c1 { padding-left: 7px; }
.c2 { width: 329px; padding-left: 7px; flex: none; }
.c3 { width: 314px; padding-left: 7px; flex: none; }
.c4 { width: 57px; text-align: right; flex: none; }
.c4h { text-align: left; padding-left: 12px; width: 64px; margin-right: -7px; }
.c5 { width: 66px; padding-left: 12px; flex: none; }
.head span { height: 26px; line-height: 27px; border-right: 1px solid #e5e5e5; }
.head .c5 { border-right: 0; }
.row-sel { background: linear-gradient(#f0f0f0, #f0f0f0) no-repeat 21px 0 / 845px 100%; }
.vscroll { width: 16px; background: #f0f0f0; flex: none; position: relative; padding: 18px 0 0 7px; }
.vthumb { display: block; width: 2px; height: 18px; background: #858585; }

.detail { margin-top: 5px; flex: 1; border-top: 2px solid #6f6f6f; border-left: 3px solid #7c7c7c; background: #f0f0f0; padding-left: 5px; padding-right: 6px; position: relative; border-bottom: 1px solid #e0e0e0; }
.detail-head { height: 21px; display: flex; align-items: center; justify-content: space-between; padding: 0 0 0 2px; position: relative; }
.detail-head::after { content: ""; position: absolute; left: 0; right: 0; bottom: -2px; height: 2px; background: #9c9c9c; }
.detail-x { width: 10px; height: 10px; margin-right: 8px; }
.tabs { display: flex; align-items: flex-end; }
.tab { border: 1px solid #e3e3e3; border-bottom: 0; background: #f0f0f0; padding: 0 5px; height: 20px; line-height: 20px; }
.tab-on { height: 22px; line-height: 19px; border-bottom: 0; padding: 0 7px; }
.detail-tabs { margin-top: 8px; margin-left: 5px; height: 21px; }
.detail-panel { margin-left: 5px; height: 106px; width: 1333px; border: 1px solid #e6e6e6; display: flex; }
.detail-main { flex: 1; padding: 17px 31px 0 13px; min-width: 0; overflow: hidden; }
.textbox { background: #f0f0f0; border: 1px solid #e8e8e8; border-top: 2px solid #6f6f6f; border-left: 2px solid #6f6f6f; padding: 2px 1px; }
.detail-box { height: 28px; overflow: hidden; white-space: nowrap; line-height: 20px; padding: 2px 1px; }
.fields { display: grid; grid-auto-rows: 24px; align-items: center; white-space: nowrap; }
.detail-fields { grid-template-columns: 90px 158px 109px 1fr; margin-top: 11px; margin-left: -2px; }
.clip { overflow: hidden; max-width: 148px; }
.detail-scroll { width: 18px; border-left: 1px solid #e6e6e6; padding: 18px 0 0 8px; }
.detail-thumb { display: block; width: 2px; height: 32px; background: #858585; }

/* actions */
.actions { width: 355px; margin-left: 5px; background: #fff; border-left: 2px solid #7c7c7c; border-top: 1px solid #888; display: flex; flex-direction: column; height: 933px; }
.act-title { height: 23px; background: #f0f0f0; border-bottom: 1px solid #a0a0a0; font-weight: bold; padding-left: 4px; line-height: 24px; flex: none; color: #000; }
.act-head { height: 25px; background: linear-gradient(#b7cfe8, #98b3d3); display: flex; align-items: center; justify-content: space-between; padding: 1px 8px 0 6px; flex: none; color: #0a0a0a; }
.act-head2 { margin-top: 5px; }
.act { height: 24px; display: flex; align-items: center; padding-left: 4px; position: relative; flex: none; color: #111; }
.act span { position: absolute; left: 30px; }
.act-sep { height: 1px; background: #ececec; margin: 0 6px 0 5px; flex: none; }
.tri-up { width: 0; height: 0; border: 6px solid transparent; border-top: 0; border-bottom: 5px solid #000; margin-right: -1px; }
.tri-right { position: absolute; right: 9px; width: 0; height: 0; border: 5px solid transparent; border-right: 0; border-left: 5px solid #000; }

/* status + taskbar */
.statusbar { height: 24px; display: flex; background: #f0f0f0; border-top: 1px solid #fafafa; flex: none; }
.st-a { width: 1699px; border-right: 1px solid #dcdcdc; }
.st-b { width: 133px; border-right: 1px solid #dcdcdc; }
.st-c { flex: 1; }
.taskbar { height: 48px; flex: none; border-top: 1px solid #b4bcc6; background: linear-gradient(90deg, #e3ebf8 0%, #d9e3f6 50%, #e1edf8 100%); display: grid; grid-template-columns: 1fr auto 1fr; align-items: center; }
.tk-left { padding-left: 17px; }
.weather { width: 24px; height: 24px; }
.tk-center { display: flex; }
.tk { width: 44px; height: 47px; display: flex; align-items: center; justify-content: center; position: relative; }
.tk-badge { position: absolute; left: 23px; top: 5px; width: 16px; height: 16px; background: #111; border-radius: 50%; }
.tk-dot { position: absolute; left: 18px; top: 40px; width: 6px; height: 3px; background: #777; border-radius: 2px; }
.tk-active::before { content: ""; position: absolute; left: 5px; top: 5px; width: 38px; height: 38px; background: #e6edf8; border-radius: 4px; box-shadow: 2px 0 0 #e2e9f5; }
.tk-active svg { position: relative; }
.tk-bar { position: absolute; left: 16px; top: 40px; width: 16px; height: 3px; background: #0a84e6; border-radius: 2px; }
.tk-right { display: flex; align-items: center; justify-content: flex-end; padding-right: 20px; color: #222; }
.tray-chev { width: 13px; height: 7px; margin-right: 14px; }
.tray-lang { margin-right: 19px; }
.tray-wifi { width: 16px; height: 12px; margin-right: 8px; }
.tray-vol { width: 16px; height: 14px; margin-right: 10px; }
.clock { display: flex; flex-direction: column; align-items: flex-end; line-height: 16px; margin-right: 11px; }
.notif { width: 16px; height: 16px; border-radius: 50%; background: #0a6cbd; color: #fff; font-size: 10px; line-height: 16px; text-align: center; font-weight: bold; }

/* dialog window */
.dialog { position: absolute; left: 844px; top: 429px; width: 625px; height: 518px; background: #f0f0f0; border-radius: 8px; border: 1px solid #b5b5b5; box-shadow: 0 8px 34px rgba(0,0,0,.38); display: flex; flex-direction: column; overflow: hidden; }
.dlg-title { height: 30px; background: #edf3fb; display: flex; align-items: center; padding-left: 9px; flex: none; }
.dlg-caption { margin-left: 4px; letter-spacing: -.12px; }
.dlg-x { width: 10px; height: 10px; margin-left: auto; margin-right: 10px; }
.dlg-body { display: flex; flex: none; height: 428px; }
.dlg-left { width: 568px; padding-left: 7px; flex: none; }
.dlg-tabs { height: 22px; margin-top: 8px; }
.dlg-panel { height: 397px; border: 1px solid #e6e6e6; padding: 15px 22px 0 14px; }
.dlg-box { height: 177px; padding: 2px 1px; line-height: 15px; }
.dlg-fields { grid-template-columns: 90.500px 157.500px 109px 1fr; margin-top: 12px; margin-left: -2px; }
.link { color: #0000ee; text-decoration: underline; margin-left: 3px; white-space: pre; letter-spacing: -.2px; }
.dlg-side { display: flex; flex-direction: column; gap: 15px; padding: 188px 0 0 19px; }
.btn { font: inherit; background: #fdfdfd; border: 1px solid #d5d5d5; border-bottom-color: #bbb; border-radius: 4px; color: #111; padding: 0; }
.btn-sq { width: 22px; height: 22px; display: flex; align-items: center; justify-content: center; }
.arr { width: 14px; height: 14px; }
.dlg-foot { flex: 1; display: flex; justify-content: space-between; padding: 23px 14px 0 12px; }
.btn-copy { width: 79px; height: 22px; }
.btn-close { width: 73px; height: 22px; }
```
